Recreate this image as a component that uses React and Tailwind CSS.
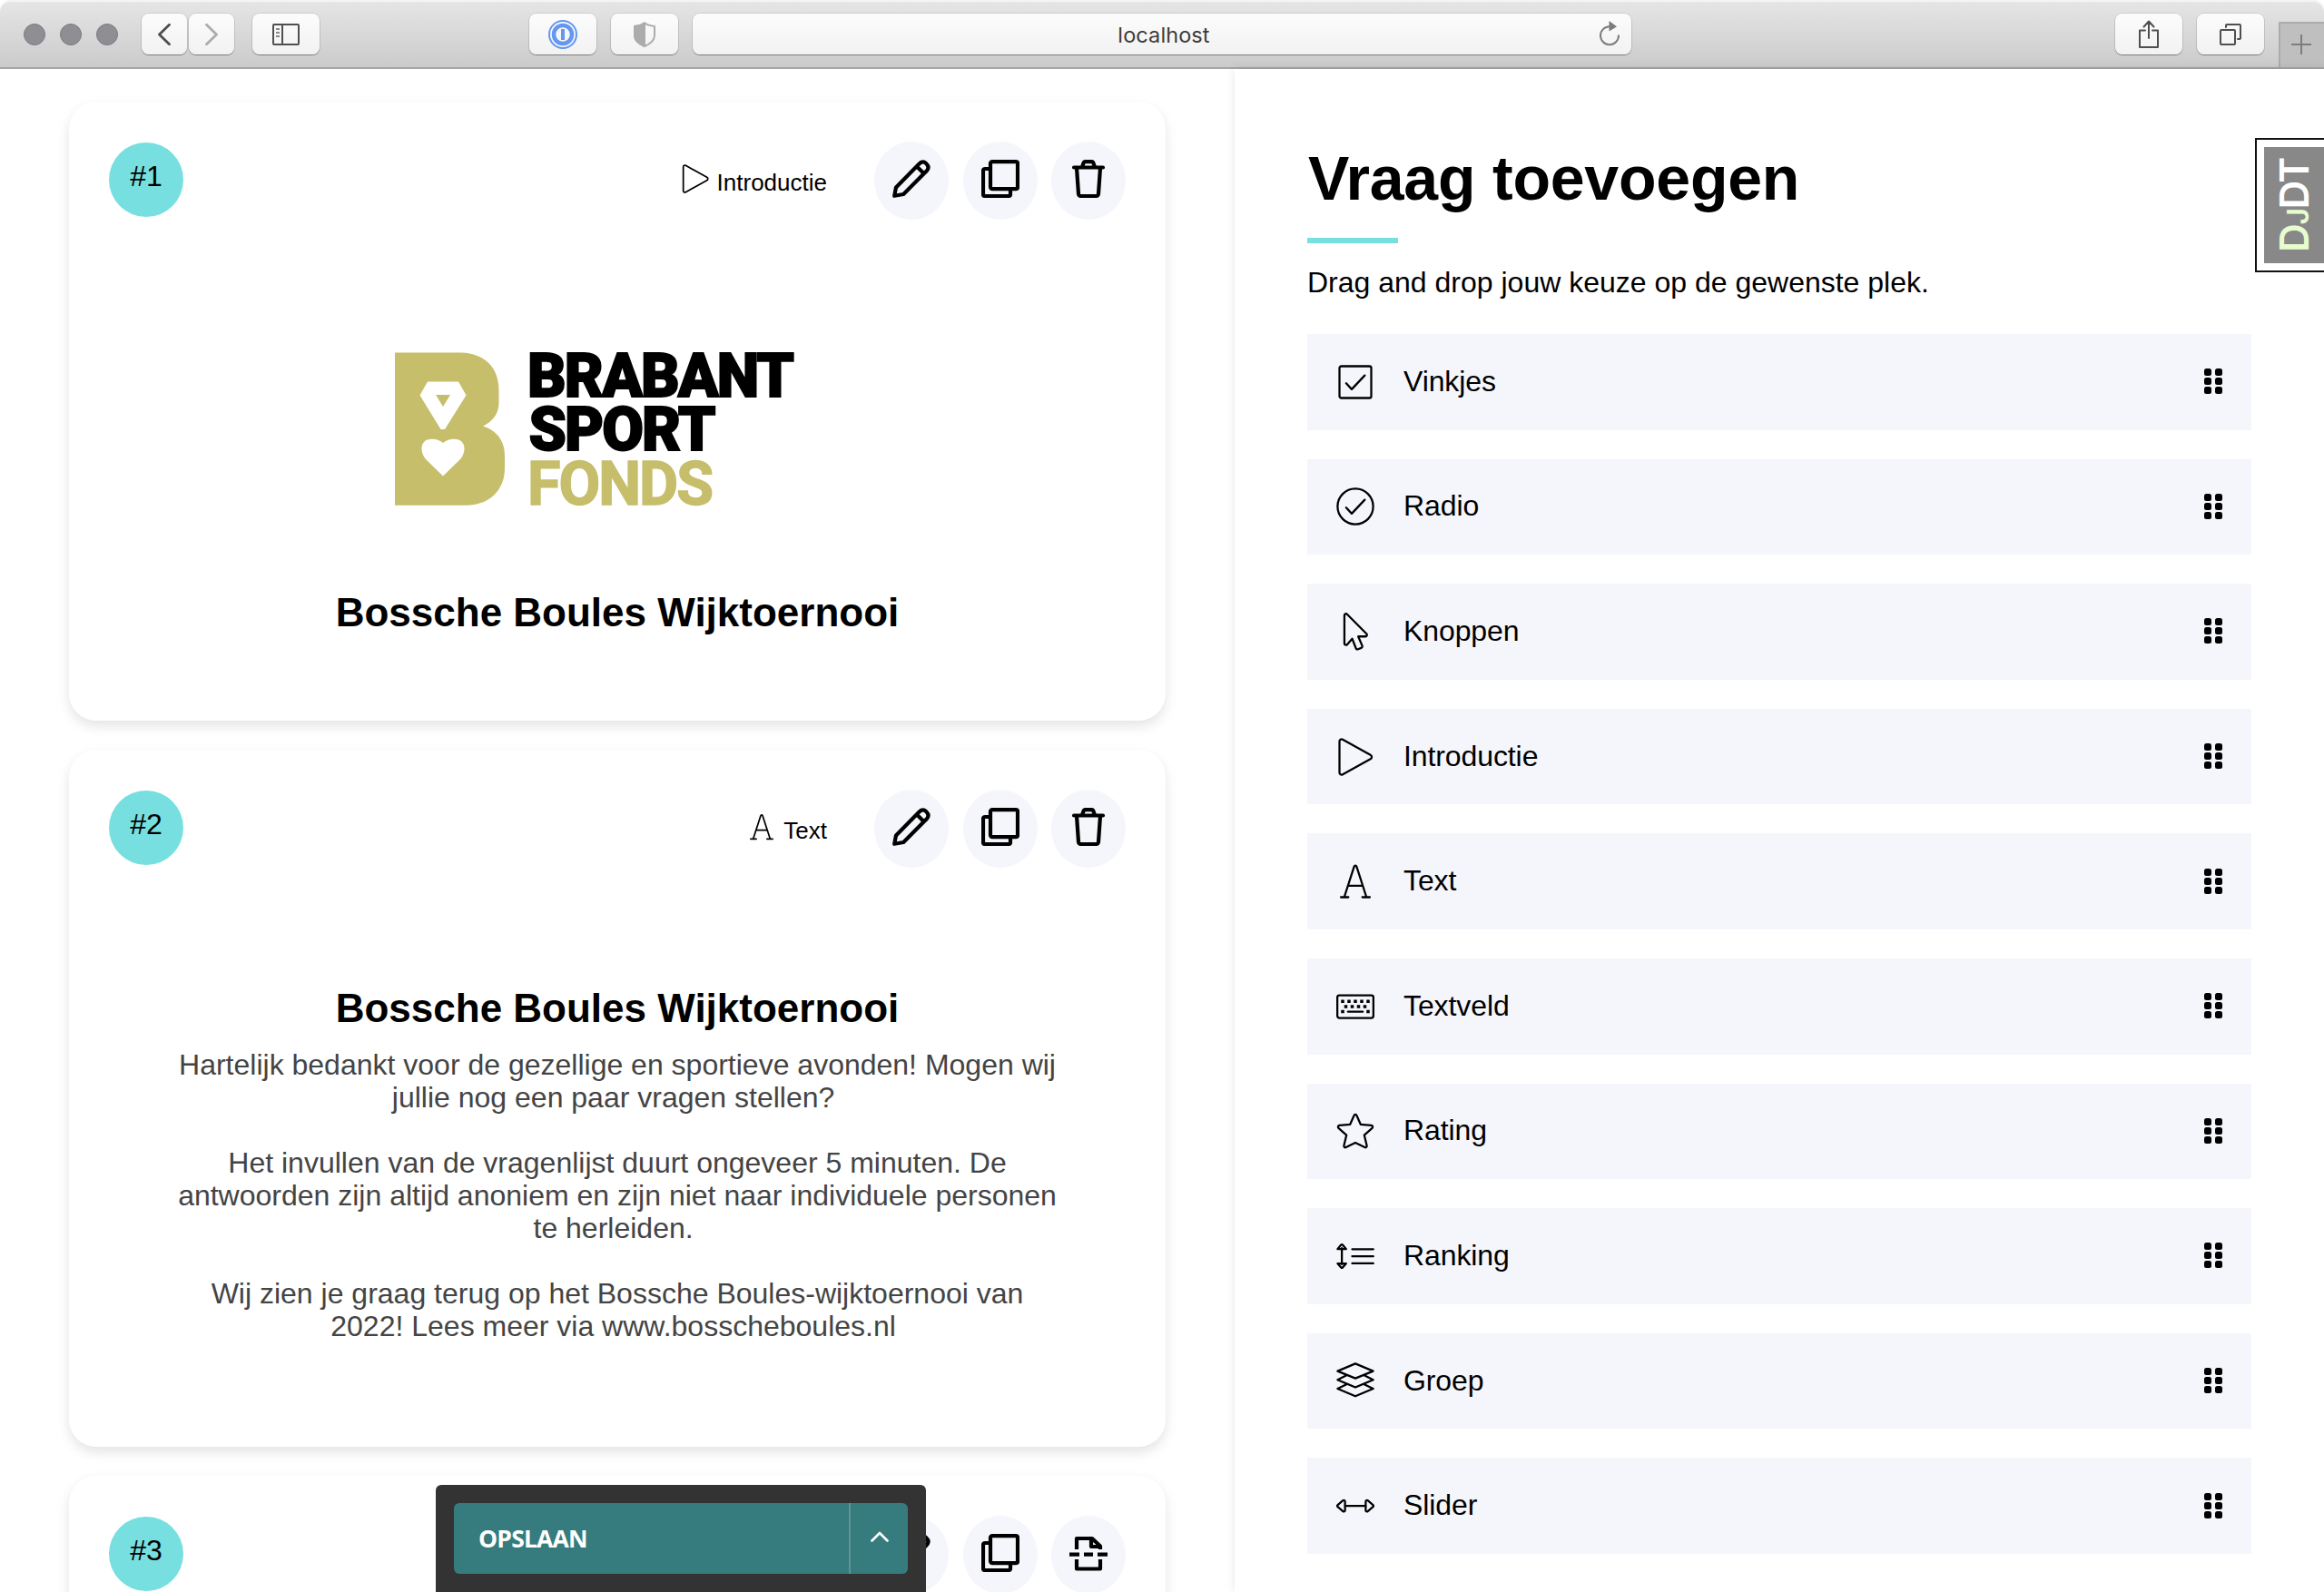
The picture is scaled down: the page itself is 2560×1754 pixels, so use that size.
const stroke = {
  fill: "none",
  stroke: "currentColor",
  strokeLinecap: "round",
  strokeLinejoin: "round",
};

/* ---------- question type icons, 24 unit grid ---------- */

const shapes = {
  vinkjes: (
    <>
      <rect x="2" y="2" width="20" height="20" rx="1.2" />
      <path d="M6.200 12.700l3.500 3.800L17.900 7.800" />
    </>
  ),
  radio: (
    <>
      <circle cx="12" cy="12" r="11.2" />
      <path d="M6.200 12.700l3.500 3.800L17.900 7.800" />
    </>
  ),
  knoppen: (
    <path d="M5.100 1.700v17.700c0 .9 1.100 1.300 1.700.7l3.200-3.700 2.300 5.900c.2.600.9.900 1.500.7l1.900-.8c.6-.2.800-.9.600-1.400l-2.500-5.800h4.500c.9 0 1.300-1 .7-1.700L6.800 1C6.200.4 5.100.8 5.100 1.700z" />
  ),
  introductie: (
    <path d="M2 2.100v19.800c0 1.100 1.100 1.600 2 1.100l17.500-9.700c1.100-.6 1.100-2 0-2.600L4 1C3.100.5 2 1 2 2.100z" />
  ),
  text: (
    <path d="M5 22L11.200 2.800c.3-.9 1.300-.9 1.600 0L19 22M7.400 14.800h9.200M2.900 22h4.700M16.400 22h4.700" />
  ),
  textveld: (
    <>
      <rect x=".65" y="4.900" width="22.700" height="14.300" rx="1.300" />
      <path
        strokeLinecap="butt"
        strokeWidth="2"
        d="M3 8.700h2M7 8.700h2M11 8.700h2M15 8.700h2M19 8.700h2M5 12h2M9 12h2M13 12h2M17 12h2M3 15.200h2M19 15.200h2"
      />
      <path strokeWidth="1.400" d="M7.400 15.200h9.200" />
    </>
  ),
  rating: (
    <path d="M12.800 2.200l2.500 5.700 6.700.6c.9.100 1.200 1.100.6 1.700l-5 4.400 1.600 6.700c.2.800-.6 1.400-1.300 1L12 19.400l-5.900 2.900c-.7.400-1.500-.2-1.300-1l1.600-6.700-5-4.400C.8 9.600 1.100 8.600 2 8.500l6.700-.6 2.500-5.700c.3-.7 1.300-.7 1.600 0z" />
  ),
  ranking: (
    <>
      <path d="M3.500 6.900v10.200M10 7.600h13.300M10 12.100h13.300M10 16.500h13.300" />
      <path d="M.8 7.500l2.200-2.600c.3-.3.700-.3 1 0l2.200 2.600zM.8 16.600l2.200 2.500c.3.300.7.300 1 0l2.200-2.500z" />
    </>
  ),
  groep: (
    <>
      <path d="M12 .8l11.200 4.700L12 10.100.8 5.500z" />
      <path d="M6.400 8.200L.8 11 12 15.700 23.200 11l-5.600-2.800" />
      <path d="M6.400 13.800L.8 16.600 12 21.300l11.200-4.700-5.600-2.800" />
    </>
  ),
  slider: (
    <>
      <path d="M5.600 12.100h12.800" />
      <path d="M5.500 9.300v5.600c0 .7-.8 1-1.300.6L.9 12.700c-.4-.3-.4-.9 0-1.200l3.300-2.800c.5-.4 1.300-.1 1.300.6zM18.500 9.300v5.600c0 .7.8 1 1.300.6l3.300-2.800c.4-.3.4-.9 0-1.200l-3.300-2.800c-.5-.4-1.300-.1-1.300.6z" />
    </>
  ),
};

function TypeIcon({ name, className }) {
  return (
    <svg viewBox="0 0 24 24" className={className} strokeWidth="1.300" {...stroke}>
      {shapes[name]}
    </svg>
  );
}

/* ---------- card action icons, 42 unit grid ---------- */

function ActionIcon({ name }) {
  return (
    <svg viewBox="0 0 42 42" className="-mt-1 size-[42px]" strokeWidth="4.200" {...stroke}>
      {name === "edit" && (
        <path d="M2.200 39.800l1.800-9.400L29.500 4.600c2.500-2.900 5.300-2.900 7.600-.700 2.900 2.800 3.200 5.600.700 8.300L12.200 38zM27 7.500l7.800 7.800" />
      )}
      {name === "copy" && (
        <>
          <rect x="10" y="2.100" width="30" height="30" rx="2" />
          <path d="M10 10H4a2 2 0 0 0-2 2v26a2 2 0 0 0 2 2h26a2 2 0 0 0 2-2v-6" />
        </>
      )}
      {name === "delete" && (
        <path d="M5 8.500h32M8 9l2 28.500a2.500 2.500 0 0 0 2.500 2.500h17a2.500 2.500 0 0 0 2.500-2.500L34 9M14 8l1.500-4.200A2.500 2.500 0 0 1 18 2.100h6a2.500 2.500 0 0 1 2.500 1.700L28 8" />
      )}
      {name === "break" && (
        <>
          <path strokeLinecap="butt" d="M8 17V5h17l9 8.500V17M24 5v9h9M8 28v10.500h26V28" />
          <path strokeLinecap="butt" d="M0 22.700h11M16 22.700h10M31 22.700h11" />
        </>
      )}
    </svg>
  );
}

function Card({ number, type, label, actions, className, children }) {
  return (
    <section
      className={`w-[1208px] shrink-0 rounded-[30px] bg-white pt-11 shadow-[0_6px_14px_rgba(0,0,0,0.11)] ${className}`}
    >
      <header className="flex h-[86px] items-start px-11">
        <span className="mt-px flex h-[82px] w-[82px] justify-center rounded-full bg-[#77dfdf] text-[32px] leading-[74px]">
          {number}
        </span>
        <div className="mr-[52px] ml-auto flex items-start gap-2">
          <TypeIcon name={type} className="mt-[25px] size-8" />
          <span className="text-[26px] leading-[90px]">{label}</span>
        </div>
        <div className="flex gap-[15.500px]">
          {actions.map((a) => (
            <span
              key={a}
              className="flex h-[86px] w-[82px] items-center justify-center rounded-[50%] bg-[#f5f6fb]"
            >
              <ActionIcon name={a} />
            </span>
          ))}
        </div>
      </header>
      {children}
    </section>
  );
}

function Logo() {
  return (
    <svg viewBox="0 -20 460 210" className="mt-[126px] ml-[359px] h-[210px] w-[460px]">
      <path
        fill="#c6be6b"
        fillRule="evenodd"
        d="M0 .5H70C98 .5 114.500 16 114.500 42V56C114.500 68 107 77 97 81.500C112 86 121 98 121 113V128C121 152 104 168.800 78 168.800H0ZM36 32.500L27.500 47.500L50.500 85H55L78.500 47.500L70 32.500ZM45 47H61L53 60ZM53 136.500L34 118C27 110 28 97 38 96C45 95 49 97 53 100C57 97 61 95 68 96C78 97 79 110 72 118Z"
      />
      <g fontFamily="Roboto, sans-serif" fontSize="67" fontWeight="900" letterSpacing="-2">
        <g stroke="#000" strokeWidth="1.800">
          <text x="146" y="48.600" textLength="292" lengthAdjust="spacingAndGlyphs">
            BRABANT
          </text>
          <text x="147.500" y="107.800" textLength="204" lengthAdjust="spacingAndGlyphs">
            SPORT
          </text>
        </g>
        <text
          x="146"
          y="167.900"
          fontWeight="700"
          fill="#c6be6b"
          stroke="#c6be6b"
          strokeWidth="1.500"
          textLength="203"
          lengthAdjust="spacingAndGlyphs"
        >
          FONDS
        </text>
      </g>
    </svg>
  );
}

/* ---------- browser chrome ---------- */

function ToolButton({ className, children }) {
  return (
    <span
      className={`flex h-[45px] shrink-0 items-center justify-center rounded-[8px] bg-gradient-to-b from-[#fcfcfc] to-[#f2f2f2] shadow-[0_0_0_1px_rgba(0,0,0,0.08),0_1px_1px_rgba(0,0,0,0.35)] ${className}`}
    >
      {children}
    </span>
  );
}

function Toolbar() {
  return (
    <div className="flex h-[76px] shrink-0 items-start rounded-t-[12px] border-b-2 border-[#a5a5a5] bg-gradient-to-b from-[#e6e6e6] to-[#cbcbcb] shadow-[inset_0_2px_0_#f4f4f4]">
      <div className="mt-[26px] ml-[26px] flex gap-4">
        {[0, 1, 2].map((i) => (
          <span key={i} className="size-6 rounded-full border border-[#7b7b80] bg-[#8e8e93]" />
        ))}
      </div>
      <div className="mt-[15px] ml-[26px] flex gap-[2px]">
        <ToolButton className="w-[50px]">
          <svg viewBox="0 0 14 24" className="h-6 w-[14px] text-[#4f4f4f]" strokeWidth="2.800" {...stroke}>
            <path d="M12.500 1.200L1.500 12l11 10.800" />
          </svg>
        </ToolButton>
        <ToolButton className="w-[50px]">
          <svg viewBox="0 0 14 24" className="h-6 w-[14px] text-[#acacac]" strokeWidth="2.800" {...stroke}>
            <path d="M1.500 1.200L12.500 12l-11 10.800" />
          </svg>
        </ToolButton>
      </div>
      <ToolButton className="mt-[15px] ml-5 w-[74px]">
        <svg viewBox="0 0 30 24" className="h-6 w-[30px] text-[#4f4f4f]" strokeWidth="2" {...stroke}>
          <rect x="1" y="1" width="28" height="22" rx="1" />
          <path d="M11 1v22" />
          <path stroke="#8a8a8a" strokeLinecap="butt" d="M4 6h4M4 10h4M4 14h4" />
        </svg>
      </ToolButton>
      <ToolButton className="mt-[15px] ml-[231px] w-[74px]">
        <svg viewBox="0 0 32 32" className="size-8 text-[#6496f2]" {...stroke}>
          <circle cx="16" cy="16" r="15" strokeWidth="2" />
          <circle cx="16" cy="16" r="10" strokeWidth="4.500" />
          <path d="M16 10v12" strokeWidth="4" strokeLinecap="butt" />
        </svg>
      </ToolButton>
      <ToolButton className="mt-[15px] ml-4 w-[74px]">
        <svg viewBox="0 0 24 28" className="h-7 w-6 text-[#acacac]" strokeWidth="2" {...stroke}>
          <path d="M12 1.300c3 2.300 6.500 3.200 11 3.700v10c0 5.500-5 9.500-11 12C6 24.500 1 20.500 1 15V5c4.500-.5 8-1.400 11-3.700z" />
          <path fill="currentColor" d="M12 1.300V27C6 24.500 1 20.500 1 15V5c4.500-.5 8-1.400 11-3.700z" />
        </svg>
      </ToolButton>
      <ToolButton className="relative mt-[15px] ml-4 w-[1034px]">
        <span className="mt-[3px] ml-1 font-[Inter,sans-serif] text-[23.500px] leading-none tracking-[0.100px] text-[#3c3c3c]">
          localhost
        </span>
        <svg
          viewBox="0 0 24 28"
          className="absolute top-[8px] right-[12px] h-7 w-6 text-[#7c7c7c]"
          strokeWidth="2"
          {...stroke}
        >
          <path d="M12 6.200A10 10 0 1 0 22 16.200" />
          <path fill="currentColor" stroke="none" d="M11.500 0v11.500L20 6.300z" />
        </svg>
      </ToolButton>
      <ToolButton className="mt-[15px] ml-[533px] w-[74px]">
        <svg viewBox="0 0 24 32" className="h-8 w-6 text-[#4f4f4f]" strokeWidth="2" {...stroke}>
          <path d="M8 11.500H2V30h20V11.500h-6M12 20V2M6.500 7.500L12 1.500l5.500 6" />
        </svg>
      </ToolButton>
      <ToolButton className="mt-[15px] ml-4 w-[74px]">
        <svg viewBox="0 0 24 24" className="size-6 text-[#4f4f4f]" strokeWidth="2" {...stroke}>
          <rect x="1" y="7" width="16" height="16" rx="1" />
          <path d="M7 4V2a1 1 0 0 1 1-1h14a1 1 0 0 1 1 1v14a1 1 0 0 1-1 1h-2" />
        </svg>
      </ToolButton>
      <span className="mt-6 ml-4 flex h-[50px] flex-1 items-center justify-center border-t-2 border-l-2 border-[#ababab] bg-[#bfbfbf] pr-[3px] pb-[2px]">
        <svg viewBox="0 0 22 22" className="size-[22px] text-[#7d7d7d]" strokeWidth="2" {...stroke}>
          <path strokeLinecap="butt" d="M11 0v22M0 11h22" />
        </svg>
      </span>
    </div>
  );
}

/* ---------- page ---------- */

const types = [
  ["vinkjes", "Vinkjes"],
  ["radio", "Radio"],
  ["knoppen", "Knoppen"],
  ["introductie", "Introductie"],
  ["text", "Text"],
  ["textveld", "Textveld"],
  ["rating", "Rating"],
  ["ranking", "Ranking"],
  ["groep", "Groep"],
  ["slider", "Slider"],
];

function TypeRow({ icon, label }) {
  return (
    <li className="flex h-[105.600px] items-center bg-[#f5f6fb] pr-8 pl-8">
      <TypeIcon name={icon} className="size-[42px]" />
      <span className="-mt-[2px] ml-8 text-[32px] leading-10 tracking-[-0.100px]">{label}</span>
      <span className="-mt-px ml-auto grid grid-cols-2 gap-x-1 gap-y-[2px]">
        {[0, 1, 2, 3, 4, 5].map((i) => (
          <i key={i} className="size-2 rounded-[2.500px] bg-black" />
        ))}
      </span>
    </li>
  );
}

export default function App() {
  return (
    <div className="relative flex h-[1754px] w-[2560px] flex-col overflow-hidden bg-white font-['Liberation_Sans',Arial,sans-serif] text-black">
      <Toolbar />
      <div className="flex min-h-0 flex-1">
        <main className="flex w-[1360px] shrink-0 flex-col gap-8 overflow-hidden pt-9 pl-[76px]">
          <Card
            number="#1"
            type="introductie"
            label="Introductie"
            actions={["edit", "copy", "delete"]}
            className="h-[682px]"
          >
            <Logo />
            <h2 className="mt-[71px] text-center text-[44px] leading-[52px] font-bold">
              Bossche Boules Wijktoernooi
            </h2>
          </Card>
          <Card
            number="#2"
            type="text"
            label="Text"
            actions={["edit", "copy", "delete"]}
            className="h-[768px]"
          >
            <h2 className="mt-[129px] text-center text-[44px] leading-[52px] font-bold">
              Bossche Boules Wijktoernooi
            </h2>
            <div className="mt-[18px] flex flex-col gap-9 text-center text-[32px] leading-9 whitespace-nowrap text-[#444]">
              <p>
                Hartelijk bedankt voor de gezellige en sportieve avonden! Mogen wij
                <br />
                jullie nog een paar vragen stellen?&nbsp;
              </p>
              <p>
                Het invullen van de vragenlijst duurt ongeveer 5 minuten. De
                <br />
                antwoorden zijn altijd anoniem en zijn niet naar individuele personen
                <br />
                te herleiden.&nbsp;
              </p>
              <p>
                Wij zien je graag terug op het Bossche Boules-wijktoernooi van
                <br />
                2022! Lees meer via www.bosscheboules.nl&nbsp;
              </p>
            </div>
          </Card>
          <Card
            number="#3"
            type="vinkjes"
            label="Vinkjes"
            actions={["edit", "copy", "break"]}
            className="h-[682px]"
          />
        </main>
        <aside className="flex flex-1 flex-col pt-[82px] pr-20 pl-20 shadow-[0_0_10px_rgba(0,0,0,0.1)]">
          <h1 className="ml-px text-[68px] leading-[76px] font-bold tracking-[-0.200px]">Vraag toevoegen</h1>
          <div className="mt-7 h-[6px] w-[100px] bg-[#77dfdf]" />
          <p className="mt-[23px] text-[32px] leading-10">
            Drag and drop jouw keuze op de gewenste plek.
          </p>
          <ul className="mt-[37px] flex flex-col gap-8">
            {types.map(([icon, label]) => (
              <TypeRow key={icon} icon={icon} label={label} />
            ))}
          </ul>
        </aside>
      </div>

      <div className="absolute top-[152px] right-0 h-[148px] w-[76px] border-2 border-r-0 border-[#111] bg-white py-2 pl-2">
        <div className="flex h-full items-center justify-center bg-[#888]">
          <span className="-rotate-90 font-[Inter,sans-serif] text-[44px] leading-none font-semibold tracking-[-1.500px] whitespace-nowrap text-white">
            <span className="text-[#e8fcd0]">
              D<span className="text-[32px]">J</span>
            </span>
            DT
          </span>
        </div>
      </div>

      <div className="absolute bottom-0 left-[480px] h-[118px] w-[540px] rounded-t-[6px] bg-[#333] p-5">
        <div className="flex h-[78px] rounded-[6px] bg-[#367b7d] font-['Open_Sans',sans-serif] text-white">
          <span className="flex flex-1 items-center pl-[27px] text-[26.500px] leading-none font-bold tracking-[-0.800px]">
            OPSLAAN
          </span>
          <span className="flex w-[65px] items-center justify-center border-l-2 border-[#5f9698] pb-1">
            <svg viewBox="0 0 20 12" className="h-3 w-5" strokeWidth="2.600" {...stroke}>
              <path d="M1.500 10.500L10 2l8.500 8.500" />
            </svg>
          </span>
        </div>
      </div>
    </div>
  );
}
